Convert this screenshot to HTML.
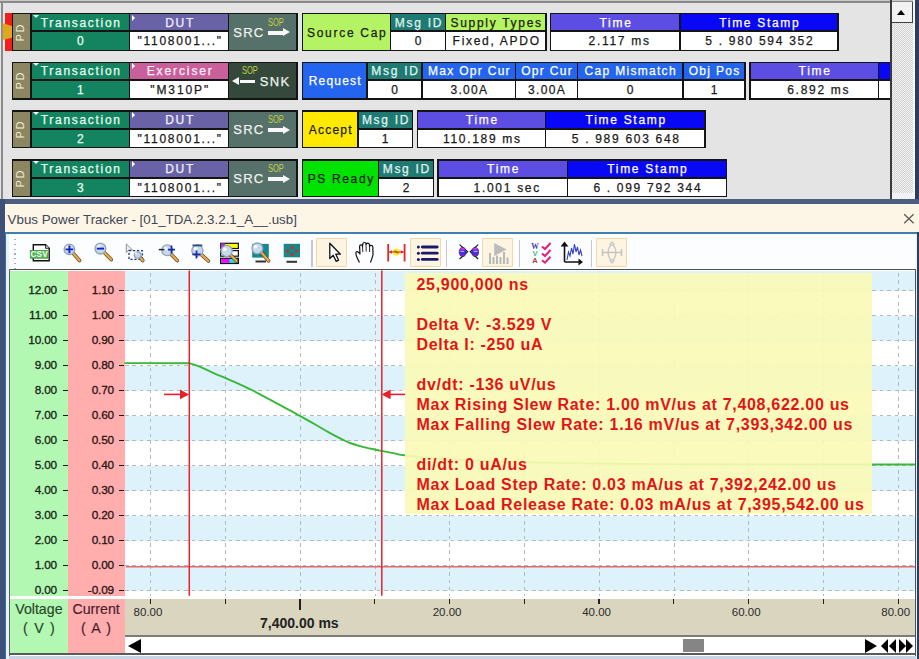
<!DOCTYPE html>
<html><head><meta charset="utf-8"><style>
html,body{margin:0;padding:0;width:919px;height:659px;overflow:hidden;background:#fff;font-family:'Liberation Sans', sans-serif}
</style></head><body>
<div style="position:absolute;left:0;top:0;width:919px;height:199px;background:#e4e4e4;overflow:hidden">
<div style="position:absolute;left:0px;top:0px;width:919px;height:1px;background:#c8c8c8"></div>
<div style="position:absolute;left:0px;top:1px;width:919px;height:1.5px;background:#8a8a8a"></div>
<div style="position:absolute;left:1px;top:1px;width:1.5px;height:198px;background:#8a8a8a"></div>
<div style="position:absolute;left:2.7px;top:12.8px;width:2.4px;height:38.2px;background:#f6e4e4"></div>
<div style="position:absolute;left:5px;top:12.8px;width:7.6px;height:38.2px;background:#f21d1d"></div>
<svg style="position:absolute;left:0;top:0" width="20" height="60"><polygon points="2.7,23.0 13.2,26.5 13.2,37.5 2.7,40.0" fill="#e0a622"/></svg>
<div style="position:absolute;left:11.8px;top:12.8px;width:19.8px;height:38.2px;background:#141414"></div>
<div style="position:absolute;left:13px;top:14.0px;width:17.4px;height:35.800000000000004px;background:#8c8762"></div>
<div style="position:absolute;left:0.3999999999999986px;top:25.5px;width:40px;height:14px;line-height:14px;text-align:center;transform:rotate(-90deg);font-family:'Liberation Sans', sans-serif;font-size:11px;letter-spacing:1.5px;text-indent:1.5px;color:#f2eed4">PD</div>
<div style="position:absolute;left:30.4px;top:12.8px;width:100.0px;height:38.2px;background:#141414"></div>
<div style="position:absolute;left:31.599999999999998px;top:14.0px;width:97.6px;height:16.200000000000003px;background:#148360"></div>
<div style="position:absolute;left:31.599999999999998px;top:32.0px;width:97.6px;height:17.800000000000004px;background:#148360"></div>
<div style="position:absolute;left:30.4px;top:14.5px;width:100.0px;height:17.3px;line-height:17.3px;text-align:center;white-space:nowrap;font-family:'Liberation Sans', sans-serif;font-size:12px;letter-spacing:1.7px;text-indent:1.7px;-webkit-text-stroke:0.25px currentColor;color:#e6fff0">Transaction</div>
<div style="position:absolute;left:30.4px;top:32.400000000000006px;width:100.0px;height:18.700000000000003px;line-height:18.700000000000003px;text-align:center;white-space:nowrap;font-family:'Liberation Sans', sans-serif;font-size:12px;letter-spacing:1.7px;text-indent:1.7px;-webkit-text-stroke:0.25px currentColor;color:#e6fff0">0</div>
<div style="position:absolute;left:32.8px;top:14.700000000000001px;width:0;height:0;border-left:3.2px solid transparent;border-right:3.2px solid transparent;border-top:3.6px solid #f0fff8"></div>
<div style="position:absolute;left:129.2px;top:12.8px;width:100.20000000000002px;height:38.2px;background:#141414"></div>
<div style="position:absolute;left:130.39999999999998px;top:14.0px;width:97.80000000000001px;height:16.200000000000003px;background:#6a62a6"></div>
<div style="position:absolute;left:130.39999999999998px;top:32.0px;width:97.80000000000001px;height:17.800000000000004px;background:#fff"></div>
<div style="position:absolute;left:129.2px;top:14.5px;width:100.20000000000002px;height:17.3px;line-height:17.3px;text-align:center;white-space:nowrap;font-family:'Liberation Sans', sans-serif;font-size:12px;letter-spacing:1.75px;text-indent:1.75px;-webkit-text-stroke:0.25px currentColor;color:#f0f0ff">DUT</div>
<div style="position:absolute;left:129.2px;top:32.400000000000006px;width:100.20000000000002px;height:18.700000000000003px;line-height:18.700000000000003px;text-align:center;white-space:nowrap;font-family:'Liberation Sans', sans-serif;font-size:12px;letter-spacing:1.75px;text-indent:1.75px;-webkit-text-stroke:0.25px currentColor;color:#1a1a1a">"1108001..."</div>
<div style="position:absolute;left:131.6px;top:14.700000000000001px;width:0;height:0;border-top:3.2px solid transparent;border-bottom:3.2px solid transparent;border-left:3.6px solid #ffffff"></div>
<div style="position:absolute;left:228.2px;top:12.8px;width:69.40000000000003px;height:38.2px;background:#141414"></div>
<div style="position:absolute;left:229.39999999999998px;top:14.0px;width:67.00000000000003px;height:35.800000000000004px;background:#56716a"></div>
<div style="position:absolute;left:233.2px;top:24.900000000000002px;width:40px;height:15px;line-height:15px;text-align:left;white-space:nowrap;font-family:'Liberation Sans', sans-serif;font-size:13px;letter-spacing:1.3px;color:#eef2ee;-webkit-text-stroke:0.25px currentColor;">SRC</div>
<div style="position:absolute;left:268.0px;top:16.7px;width:30px;height:10px;line-height:10px;text-align:left;white-space:nowrap;font-family:'Liberation Sans', sans-serif;font-size:11px;color:#c4d040;transform:scaleX(0.68);transform-origin:left center;">SOP</div>
<div style="position:absolute;left:267.8px;top:30.900000000000006px;width:16px;height:3.8px;background:#f8f8f8"></div>
<div style="position:absolute;left:283.2px;top:28.300000000000004px;width:0;height:0;border-top:4.5px solid transparent;border-bottom:4.5px solid transparent;border-left:7.6px solid #f8f8f8"></div>
<div style="position:absolute;left:301.6px;top:12.8px;width:89.59999999999997px;height:38.2px;background:#141414"></div>
<div style="position:absolute;left:302.90000000000003px;top:14.0px;width:86.99999999999997px;height:35.800000000000004px;background:#b4f464"></div>
<div style="position:absolute;left:301.6px;top:13.5px;width:89.59999999999997px;height:38.2px;line-height:38.2px;text-align:center;white-space:nowrap;font-family:'Liberation Sans', sans-serif;font-size:12px;letter-spacing:1.7px;text-indent:1.7px;-webkit-text-stroke:0.25px currentColor;color:#1c2010">Source Cap</div>
<div style="position:absolute;left:390px;top:12.8px;width:56.19999999999999px;height:38.2px;background:#141414"></div>
<div style="position:absolute;left:391.2px;top:14.0px;width:53.79999999999999px;height:16.200000000000003px;background:#1e7a72"></div>
<div style="position:absolute;left:391.2px;top:32.0px;width:53.79999999999999px;height:17.800000000000004px;background:#fff"></div>
<div style="position:absolute;left:390px;top:14.5px;width:56.19999999999999px;height:17.3px;line-height:17.3px;text-align:center;white-space:nowrap;font-family:'Liberation Sans', sans-serif;font-size:12px;letter-spacing:1.7px;text-indent:1.7px;-webkit-text-stroke:0.25px currentColor;color:#e0f4f0">Msg ID</div>
<div style="position:absolute;left:390px;top:32.400000000000006px;width:56.19999999999999px;height:18.700000000000003px;line-height:18.700000000000003px;text-align:center;white-space:nowrap;font-family:'Liberation Sans', sans-serif;font-size:12px;letter-spacing:1.7px;text-indent:1.7px;-webkit-text-stroke:0.25px currentColor;color:#1a1a1a">0</div>
<div style="position:absolute;left:445px;top:12.8px;width:101.60000000000002px;height:38.2px;background:#141414"></div>
<div style="position:absolute;left:446.2px;top:14.0px;width:99.20000000000002px;height:16.200000000000003px;background:#b4f464"></div>
<div style="position:absolute;left:446.2px;top:32.0px;width:99.20000000000002px;height:17.800000000000004px;background:#fff"></div>
<div style="position:absolute;left:445px;top:14.5px;width:101.60000000000002px;height:17.3px;line-height:17.3px;text-align:center;white-space:nowrap;font-family:'Liberation Sans', sans-serif;font-size:12px;letter-spacing:1.7px;text-indent:1.7px;-webkit-text-stroke:0.25px currentColor;color:#1c2010">Supply Types</div>
<div style="position:absolute;left:445px;top:32.400000000000006px;width:101.60000000000002px;height:18.700000000000003px;line-height:18.700000000000003px;text-align:center;white-space:nowrap;font-family:'Liberation Sans', sans-serif;font-size:12px;letter-spacing:1.7px;text-indent:1.7px;-webkit-text-stroke:0.25px currentColor;color:#1a1a1a">Fixed, APDO</div>
<div style="position:absolute;left:549.8px;top:12.8px;width:130.80000000000007px;height:38.2px;background:#141414"></div>
<div style="position:absolute;left:551.0px;top:14.0px;width:128.40000000000006px;height:16.200000000000003px;background:#5c4ee2"></div>
<div style="position:absolute;left:551.0px;top:32.0px;width:128.40000000000006px;height:17.800000000000004px;background:#fff"></div>
<div style="position:absolute;left:549.8px;top:14.5px;width:130.80000000000007px;height:17.3px;line-height:17.3px;text-align:center;white-space:nowrap;font-family:'Liberation Sans', sans-serif;font-size:12px;letter-spacing:1.7px;text-indent:1.7px;-webkit-text-stroke:0.25px currentColor;color:#ffffff">Time</div>
<div style="position:absolute;left:553.4px;top:32.400000000000006px;width:130.80000000000007px;height:18.700000000000003px;line-height:18.700000000000003px;text-align:center;white-space:nowrap;font-family:'Liberation Sans', sans-serif;font-size:12px;letter-spacing:1.7px;text-indent:1.7px;-webkit-text-stroke:0.25px currentColor;color:#1a1a1a">2.117 ms</div>
<div style="position:absolute;left:679.4px;top:12.8px;width:159.20000000000005px;height:38.2px;background:#141414"></div>
<div style="position:absolute;left:680.6px;top:14.0px;width:156.80000000000004px;height:16.200000000000003px;background:#0808f6"></div>
<div style="position:absolute;left:680.6px;top:32.0px;width:156.80000000000004px;height:17.800000000000004px;background:#fff"></div>
<div style="position:absolute;left:679.4px;top:14.5px;width:159.20000000000005px;height:17.3px;line-height:17.3px;text-align:center;white-space:nowrap;font-family:'Liberation Sans', sans-serif;font-size:12px;letter-spacing:1.7px;text-indent:1.7px;-webkit-text-stroke:0.25px currentColor;color:#ffffff">Time Stamp</div>
<div style="position:absolute;left:679.4px;top:32.400000000000006px;width:159.20000000000005px;height:18.700000000000003px;line-height:18.700000000000003px;text-align:center;white-space:nowrap;font-family:'Liberation Sans', sans-serif;font-size:12px;letter-spacing:1.7px;text-indent:1.7px;-webkit-text-stroke:0.25px currentColor;color:#1a1a1a">5 . 980 594 352</div>
<div style="position:absolute;left:11.8px;top:61.5px;width:19.8px;height:38.2px;background:#141414"></div>
<div style="position:absolute;left:13px;top:62.7px;width:17.4px;height:35.800000000000004px;background:#8c8762"></div>
<div style="position:absolute;left:0.3999999999999986px;top:74.19999999999999px;width:40px;height:14px;line-height:14px;text-align:center;transform:rotate(-90deg);font-family:'Liberation Sans', sans-serif;font-size:11px;letter-spacing:1.5px;text-indent:1.5px;color:#f2eed4">PD</div>
<div style="position:absolute;left:30.4px;top:61.5px;width:100.0px;height:38.2px;background:#141414"></div>
<div style="position:absolute;left:31.599999999999998px;top:62.7px;width:97.6px;height:16.200000000000003px;background:#148360"></div>
<div style="position:absolute;left:31.599999999999998px;top:80.7px;width:97.6px;height:17.800000000000004px;background:#148360"></div>
<div style="position:absolute;left:30.4px;top:63.2px;width:100.0px;height:17.3px;line-height:17.3px;text-align:center;white-space:nowrap;font-family:'Liberation Sans', sans-serif;font-size:12px;letter-spacing:1.7px;text-indent:1.7px;-webkit-text-stroke:0.25px currentColor;color:#e6fff0">Transaction</div>
<div style="position:absolute;left:30.4px;top:81.1px;width:100.0px;height:18.700000000000003px;line-height:18.700000000000003px;text-align:center;white-space:nowrap;font-family:'Liberation Sans', sans-serif;font-size:12px;letter-spacing:1.7px;text-indent:1.7px;-webkit-text-stroke:0.25px currentColor;color:#e6fff0">1</div>
<div style="position:absolute;left:32.8px;top:63.4px;width:0;height:0;border-left:3.2px solid transparent;border-right:3.2px solid transparent;border-top:3.6px solid #f0fff8"></div>
<div style="position:absolute;left:129.2px;top:61.5px;width:100.20000000000002px;height:38.2px;background:#141414"></div>
<div style="position:absolute;left:130.39999999999998px;top:62.7px;width:97.80000000000001px;height:16.200000000000003px;background:#c9609c"></div>
<div style="position:absolute;left:130.39999999999998px;top:80.7px;width:97.80000000000001px;height:17.800000000000004px;background:#fff"></div>
<div style="position:absolute;left:129.2px;top:63.2px;width:100.20000000000002px;height:17.3px;line-height:17.3px;text-align:center;white-space:nowrap;font-family:'Liberation Sans', sans-serif;font-size:12px;letter-spacing:1.9px;text-indent:1.9px;-webkit-text-stroke:0.25px currentColor;color:#fff0f8">Exerciser</div>
<div style="position:absolute;left:129.2px;top:81.1px;width:100.20000000000002px;height:18.700000000000003px;line-height:18.700000000000003px;text-align:center;white-space:nowrap;font-family:'Liberation Sans', sans-serif;font-size:12px;letter-spacing:1.9px;text-indent:1.9px;-webkit-text-stroke:0.25px currentColor;color:#1a1a1a">"M310P"</div>
<div style="position:absolute;left:131.6px;top:63.4px;width:0;height:0;border-top:3.2px solid transparent;border-bottom:3.2px solid transparent;border-left:3.6px solid #ffffff"></div>
<div style="position:absolute;left:228.2px;top:61.5px;width:69.40000000000003px;height:38.2px;background:#141414"></div>
<div style="position:absolute;left:229.39999999999998px;top:62.7px;width:67.00000000000003px;height:35.800000000000004px;background:#34493c"></div>
<div style="position:absolute;left:259.8px;top:73.6px;width:40px;height:15px;line-height:15px;text-align:left;white-space:nowrap;font-family:'Liberation Sans', sans-serif;font-size:13px;letter-spacing:1.3px;color:#eef2ee;-webkit-text-stroke:0.25px currentColor;">SNK</div>
<div style="position:absolute;left:241.5px;top:65.4px;width:30px;height:10px;line-height:10px;text-align:left;white-space:nowrap;font-family:'Liberation Sans', sans-serif;font-size:11px;color:#c4d040;transform:scaleX(0.68);transform-origin:left center;">SOP</div>
<div style="position:absolute;left:240px;top:79.6px;width:15px;height:3.8px;background:#f8f8f8"></div>
<div style="position:absolute;left:232.2px;top:77.1px;width:0;height:0;border-top:4.4px solid transparent;border-bottom:4.4px solid transparent;border-right:7.8px solid #f8f8f8"></div>
<div style="position:absolute;left:301.6px;top:61.5px;width:66.19999999999999px;height:38.2px;background:#141414"></div>
<div style="position:absolute;left:302.90000000000003px;top:62.7px;width:63.59999999999999px;height:35.800000000000004px;background:#2365ee"></div>
<div style="position:absolute;left:301.6px;top:62.2px;width:66.19999999999999px;height:38.2px;line-height:38.2px;text-align:center;white-space:nowrap;font-family:'Liberation Sans', sans-serif;font-size:12px;letter-spacing:1.2px;text-indent:1.2px;-webkit-text-stroke:0.25px currentColor;color:#ffffff">Request</div>
<div style="position:absolute;left:366.6px;top:61.5px;width:56.0px;height:38.2px;background:#141414"></div>
<div style="position:absolute;left:367.8px;top:62.7px;width:53.6px;height:16.200000000000003px;background:#1e7a72"></div>
<div style="position:absolute;left:367.8px;top:80.7px;width:53.6px;height:17.800000000000004px;background:#fff"></div>
<div style="position:absolute;left:366.6px;top:63.2px;width:56.0px;height:17.3px;line-height:17.3px;text-align:center;white-space:nowrap;font-family:'Liberation Sans', sans-serif;font-size:12px;letter-spacing:1.7px;text-indent:1.7px;-webkit-text-stroke:0.25px currentColor;color:#e0f4f0">Msg ID</div>
<div style="position:absolute;left:366.6px;top:81.1px;width:56.0px;height:18.700000000000003px;line-height:18.700000000000003px;text-align:center;white-space:nowrap;font-family:'Liberation Sans', sans-serif;font-size:12px;letter-spacing:1.7px;text-indent:1.7px;-webkit-text-stroke:0.25px currentColor;color:#1a1a1a">0</div>
<div style="position:absolute;left:421.4px;top:61.5px;width:94.80000000000007px;height:38.2px;background:#141414"></div>
<div style="position:absolute;left:422.59999999999997px;top:62.7px;width:92.40000000000006px;height:16.200000000000003px;background:#2365ee"></div>
<div style="position:absolute;left:422.59999999999997px;top:80.7px;width:92.40000000000006px;height:17.800000000000004px;background:#fff"></div>
<div style="position:absolute;left:421.4px;top:63.2px;width:94.80000000000007px;height:17.3px;line-height:17.3px;text-align:center;white-space:nowrap;font-family:'Liberation Sans', sans-serif;font-size:12px;letter-spacing:1.3px;text-indent:1.3px;-webkit-text-stroke:0.25px currentColor;color:#ffffff">Max Opr Cur</div>
<div style="position:absolute;left:421.4px;top:81.1px;width:94.80000000000007px;height:18.700000000000003px;line-height:18.700000000000003px;text-align:center;white-space:nowrap;font-family:'Liberation Sans', sans-serif;font-size:12px;letter-spacing:1.3px;text-indent:1.3px;-webkit-text-stroke:0.25px currentColor;color:#1a1a1a">3.00A</div>
<div style="position:absolute;left:515px;top:61.5px;width:62.799999999999955px;height:38.2px;background:#141414"></div>
<div style="position:absolute;left:516.2px;top:62.7px;width:60.399999999999956px;height:16.200000000000003px;background:#2365ee"></div>
<div style="position:absolute;left:516.2px;top:80.7px;width:60.399999999999956px;height:17.800000000000004px;background:#fff"></div>
<div style="position:absolute;left:515px;top:63.2px;width:62.799999999999955px;height:17.3px;line-height:17.3px;text-align:center;white-space:nowrap;font-family:'Liberation Sans', sans-serif;font-size:12px;letter-spacing:1.3px;text-indent:1.3px;-webkit-text-stroke:0.25px currentColor;color:#ffffff">Opr Cur</div>
<div style="position:absolute;left:515px;top:81.1px;width:62.799999999999955px;height:18.700000000000003px;line-height:18.700000000000003px;text-align:center;white-space:nowrap;font-family:'Liberation Sans', sans-serif;font-size:12px;letter-spacing:1.3px;text-indent:1.3px;-webkit-text-stroke:0.25px currentColor;color:#1a1a1a">3.00A</div>
<div style="position:absolute;left:576.6px;top:61.5px;width:107.0px;height:38.2px;background:#141414"></div>
<div style="position:absolute;left:577.8000000000001px;top:62.7px;width:104.6px;height:16.200000000000003px;background:#2365ee"></div>
<div style="position:absolute;left:577.8000000000001px;top:80.7px;width:104.6px;height:17.800000000000004px;background:#fff"></div>
<div style="position:absolute;left:576.6px;top:63.2px;width:107.0px;height:17.3px;line-height:17.3px;text-align:center;white-space:nowrap;font-family:'Liberation Sans', sans-serif;font-size:12px;letter-spacing:1.3px;text-indent:1.3px;-webkit-text-stroke:0.25px currentColor;color:#ffffff">Cap Mismatch</div>
<div style="position:absolute;left:576.6px;top:81.1px;width:107.0px;height:18.700000000000003px;line-height:18.700000000000003px;text-align:center;white-space:nowrap;font-family:'Liberation Sans', sans-serif;font-size:12px;letter-spacing:1.3px;text-indent:1.3px;-webkit-text-stroke:0.25px currentColor;color:#1a1a1a">0</div>
<div style="position:absolute;left:682.4px;top:61.5px;width:63.200000000000045px;height:38.2px;background:#141414"></div>
<div style="position:absolute;left:683.6px;top:62.7px;width:60.80000000000005px;height:16.200000000000003px;background:#2365ee"></div>
<div style="position:absolute;left:683.6px;top:80.7px;width:60.80000000000005px;height:17.800000000000004px;background:#fff"></div>
<div style="position:absolute;left:682.4px;top:63.2px;width:63.200000000000045px;height:17.3px;line-height:17.3px;text-align:center;white-space:nowrap;font-family:'Liberation Sans', sans-serif;font-size:12px;letter-spacing:1.3px;text-indent:1.3px;-webkit-text-stroke:0.25px currentColor;color:#ffffff">Obj Pos</div>
<div style="position:absolute;left:682.4px;top:81.1px;width:63.200000000000045px;height:18.700000000000003px;line-height:18.700000000000003px;text-align:center;white-space:nowrap;font-family:'Liberation Sans', sans-serif;font-size:12px;letter-spacing:1.3px;text-indent:1.3px;-webkit-text-stroke:0.25px currentColor;color:#1a1a1a">1</div>
<div style="position:absolute;left:749.4px;top:61.5px;width:129.80000000000007px;height:38.2px;background:#141414"></div>
<div style="position:absolute;left:750.6px;top:62.7px;width:127.40000000000006px;height:16.200000000000003px;background:#5c4ee2"></div>
<div style="position:absolute;left:750.6px;top:80.7px;width:127.40000000000006px;height:17.800000000000004px;background:#fff"></div>
<div style="position:absolute;left:749.4px;top:63.2px;width:129.80000000000007px;height:17.3px;line-height:17.3px;text-align:center;white-space:nowrap;font-family:'Liberation Sans', sans-serif;font-size:12px;letter-spacing:1.7px;text-indent:1.7px;-webkit-text-stroke:0.25px currentColor;color:#ffffff">Time</div>
<div style="position:absolute;left:753.0px;top:81.1px;width:129.80000000000007px;height:18.700000000000003px;line-height:18.700000000000003px;text-align:center;white-space:nowrap;font-family:'Liberation Sans', sans-serif;font-size:12px;letter-spacing:1.7px;text-indent:1.7px;-webkit-text-stroke:0.25px currentColor;color:#1a1a1a">6.892 ms</div>
<div style="position:absolute;left:878px;top:61.5px;width:82px;height:38.2px;background:#141414"></div>
<div style="position:absolute;left:879.2px;top:62.7px;width:79.6px;height:16.200000000000003px;background:#0808f6"></div>
<div style="position:absolute;left:879.2px;top:80.7px;width:79.6px;height:17.800000000000004px;background:#fff"></div>
<div style="position:absolute;left:878px;top:63.2px;width:82px;height:17.3px;line-height:17.3px;text-align:center;white-space:nowrap;font-family:'Liberation Sans', sans-serif;font-size:12px;letter-spacing:1.7px;text-indent:1.7px;-webkit-text-stroke:0.25px currentColor;color:#ffffff"></div>
<div style="position:absolute;left:878px;top:81.1px;width:82px;height:18.700000000000003px;line-height:18.700000000000003px;text-align:center;white-space:nowrap;font-family:'Liberation Sans', sans-serif;font-size:12px;letter-spacing:1.7px;text-indent:1.7px;-webkit-text-stroke:0.25px currentColor;color:#1a1a1a"></div>
<div style="position:absolute;left:11.8px;top:110.3px;width:19.8px;height:38.2px;background:#141414"></div>
<div style="position:absolute;left:13px;top:111.5px;width:17.4px;height:35.800000000000004px;background:#8c8762"></div>
<div style="position:absolute;left:0.3999999999999986px;top:123.0px;width:40px;height:14px;line-height:14px;text-align:center;transform:rotate(-90deg);font-family:'Liberation Sans', sans-serif;font-size:11px;letter-spacing:1.5px;text-indent:1.5px;color:#f2eed4">PD</div>
<div style="position:absolute;left:30.4px;top:110.3px;width:100.0px;height:38.2px;background:#141414"></div>
<div style="position:absolute;left:31.599999999999998px;top:111.5px;width:97.6px;height:16.200000000000003px;background:#148360"></div>
<div style="position:absolute;left:31.599999999999998px;top:129.5px;width:97.6px;height:17.800000000000004px;background:#148360"></div>
<div style="position:absolute;left:30.4px;top:112.0px;width:100.0px;height:17.3px;line-height:17.3px;text-align:center;white-space:nowrap;font-family:'Liberation Sans', sans-serif;font-size:12px;letter-spacing:1.7px;text-indent:1.7px;-webkit-text-stroke:0.25px currentColor;color:#e6fff0">Transaction</div>
<div style="position:absolute;left:30.4px;top:129.89999999999998px;width:100.0px;height:18.700000000000003px;line-height:18.700000000000003px;text-align:center;white-space:nowrap;font-family:'Liberation Sans', sans-serif;font-size:12px;letter-spacing:1.7px;text-indent:1.7px;-webkit-text-stroke:0.25px currentColor;color:#e6fff0">2</div>
<div style="position:absolute;left:32.8px;top:112.2px;width:0;height:0;border-left:3.2px solid transparent;border-right:3.2px solid transparent;border-top:3.6px solid #f0fff8"></div>
<div style="position:absolute;left:129.2px;top:110.3px;width:100.20000000000002px;height:38.2px;background:#141414"></div>
<div style="position:absolute;left:130.39999999999998px;top:111.5px;width:97.80000000000001px;height:16.200000000000003px;background:#6a62a6"></div>
<div style="position:absolute;left:130.39999999999998px;top:129.5px;width:97.80000000000001px;height:17.800000000000004px;background:#fff"></div>
<div style="position:absolute;left:129.2px;top:112.0px;width:100.20000000000002px;height:17.3px;line-height:17.3px;text-align:center;white-space:nowrap;font-family:'Liberation Sans', sans-serif;font-size:12px;letter-spacing:1.75px;text-indent:1.75px;-webkit-text-stroke:0.25px currentColor;color:#f0f0ff">DUT</div>
<div style="position:absolute;left:129.2px;top:129.89999999999998px;width:100.20000000000002px;height:18.700000000000003px;line-height:18.700000000000003px;text-align:center;white-space:nowrap;font-family:'Liberation Sans', sans-serif;font-size:12px;letter-spacing:1.75px;text-indent:1.75px;-webkit-text-stroke:0.25px currentColor;color:#1a1a1a">"1108001..."</div>
<div style="position:absolute;left:131.6px;top:112.2px;width:0;height:0;border-top:3.2px solid transparent;border-bottom:3.2px solid transparent;border-left:3.6px solid #ffffff"></div>
<div style="position:absolute;left:228.2px;top:110.3px;width:69.40000000000003px;height:38.2px;background:#141414"></div>
<div style="position:absolute;left:229.39999999999998px;top:111.5px;width:67.00000000000003px;height:35.800000000000004px;background:#56716a"></div>
<div style="position:absolute;left:233.2px;top:122.4px;width:40px;height:15px;line-height:15px;text-align:left;white-space:nowrap;font-family:'Liberation Sans', sans-serif;font-size:13px;letter-spacing:1.3px;color:#eef2ee;-webkit-text-stroke:0.25px currentColor;">SRC</div>
<div style="position:absolute;left:268.0px;top:114.2px;width:30px;height:10px;line-height:10px;text-align:left;white-space:nowrap;font-family:'Liberation Sans', sans-serif;font-size:11px;color:#c4d040;transform:scaleX(0.68);transform-origin:left center;">SOP</div>
<div style="position:absolute;left:267.8px;top:128.4px;width:16px;height:3.8px;background:#f8f8f8"></div>
<div style="position:absolute;left:283.2px;top:125.80000000000001px;width:0;height:0;border-top:4.5px solid transparent;border-bottom:4.5px solid transparent;border-left:7.6px solid #f8f8f8"></div>
<div style="position:absolute;left:301.6px;top:110.3px;width:57.0px;height:38.2px;background:#141414"></div>
<div style="position:absolute;left:302.90000000000003px;top:111.5px;width:54.4px;height:35.800000000000004px;background:#ffe900"></div>
<div style="position:absolute;left:301.6px;top:111.0px;width:57.0px;height:38.2px;line-height:38.2px;text-align:center;white-space:nowrap;font-family:'Liberation Sans', sans-serif;font-size:12px;letter-spacing:1.25px;text-indent:1.25px;-webkit-text-stroke:0.25px currentColor;color:#1c1c00">Accept</div>
<div style="position:absolute;left:357.4px;top:110.3px;width:55.60000000000002px;height:38.2px;background:#141414"></div>
<div style="position:absolute;left:358.59999999999997px;top:111.5px;width:53.200000000000024px;height:16.200000000000003px;background:#1e7a72"></div>
<div style="position:absolute;left:358.59999999999997px;top:129.5px;width:53.200000000000024px;height:17.800000000000004px;background:#fff"></div>
<div style="position:absolute;left:357.4px;top:112.0px;width:55.60000000000002px;height:17.3px;line-height:17.3px;text-align:center;white-space:nowrap;font-family:'Liberation Sans', sans-serif;font-size:12px;letter-spacing:1.7px;text-indent:1.7px;-webkit-text-stroke:0.25px currentColor;color:#e0f4f0">Msg ID</div>
<div style="position:absolute;left:357.4px;top:129.89999999999998px;width:55.60000000000002px;height:18.700000000000003px;line-height:18.700000000000003px;text-align:center;white-space:nowrap;font-family:'Liberation Sans', sans-serif;font-size:12px;letter-spacing:1.7px;text-indent:1.7px;-webkit-text-stroke:0.25px currentColor;color:#1a1a1a">1</div>
<div style="position:absolute;left:416.6px;top:110.3px;width:129.79999999999995px;height:38.2px;background:#141414"></div>
<div style="position:absolute;left:417.8px;top:111.5px;width:127.39999999999995px;height:16.200000000000003px;background:#5c4ee2"></div>
<div style="position:absolute;left:417.8px;top:129.5px;width:127.39999999999995px;height:17.800000000000004px;background:#fff"></div>
<div style="position:absolute;left:416.6px;top:112.0px;width:129.79999999999995px;height:17.3px;line-height:17.3px;text-align:center;white-space:nowrap;font-family:'Liberation Sans', sans-serif;font-size:12px;letter-spacing:1.7px;text-indent:1.7px;-webkit-text-stroke:0.25px currentColor;color:#ffffff">Time</div>
<div style="position:absolute;left:416.6px;top:129.89999999999998px;width:129.79999999999995px;height:18.700000000000003px;line-height:18.700000000000003px;text-align:center;white-space:nowrap;font-family:'Liberation Sans', sans-serif;font-size:12px;letter-spacing:1.7px;text-indent:1.7px;-webkit-text-stroke:0.25px currentColor;color:#1a1a1a">110.189 ms</div>
<div style="position:absolute;left:545.2px;top:110.3px;width:160.39999999999998px;height:38.2px;background:#141414"></div>
<div style="position:absolute;left:546.4000000000001px;top:111.5px;width:157.99999999999997px;height:16.200000000000003px;background:#0808f6"></div>
<div style="position:absolute;left:546.4000000000001px;top:129.5px;width:157.99999999999997px;height:17.800000000000004px;background:#fff"></div>
<div style="position:absolute;left:545.2px;top:112.0px;width:160.39999999999998px;height:17.3px;line-height:17.3px;text-align:center;white-space:nowrap;font-family:'Liberation Sans', sans-serif;font-size:12px;letter-spacing:1.7px;text-indent:1.7px;-webkit-text-stroke:0.25px currentColor;color:#ffffff">Time Stamp</div>
<div style="position:absolute;left:545.2px;top:129.89999999999998px;width:160.39999999999998px;height:18.700000000000003px;line-height:18.700000000000003px;text-align:center;white-space:nowrap;font-family:'Liberation Sans', sans-serif;font-size:12px;letter-spacing:1.7px;text-indent:1.7px;-webkit-text-stroke:0.25px currentColor;color:#1a1a1a">5 . 989 603 648</div>
<div style="position:absolute;left:11.8px;top:159.3px;width:19.8px;height:38.2px;background:#141414"></div>
<div style="position:absolute;left:13px;top:160.5px;width:17.4px;height:35.800000000000004px;background:#8c8762"></div>
<div style="position:absolute;left:0.3999999999999986px;top:172.0px;width:40px;height:14px;line-height:14px;text-align:center;transform:rotate(-90deg);font-family:'Liberation Sans', sans-serif;font-size:11px;letter-spacing:1.5px;text-indent:1.5px;color:#f2eed4">PD</div>
<div style="position:absolute;left:30.4px;top:159.3px;width:100.0px;height:38.2px;background:#141414"></div>
<div style="position:absolute;left:31.599999999999998px;top:160.5px;width:97.6px;height:16.200000000000003px;background:#148360"></div>
<div style="position:absolute;left:31.599999999999998px;top:178.50000000000003px;width:97.6px;height:17.800000000000004px;background:#148360"></div>
<div style="position:absolute;left:30.4px;top:161.0px;width:100.0px;height:17.3px;line-height:17.3px;text-align:center;white-space:nowrap;font-family:'Liberation Sans', sans-serif;font-size:12px;letter-spacing:1.7px;text-indent:1.7px;-webkit-text-stroke:0.25px currentColor;color:#e6fff0">Transaction</div>
<div style="position:absolute;left:30.4px;top:178.9px;width:100.0px;height:18.700000000000003px;line-height:18.700000000000003px;text-align:center;white-space:nowrap;font-family:'Liberation Sans', sans-serif;font-size:12px;letter-spacing:1.7px;text-indent:1.7px;-webkit-text-stroke:0.25px currentColor;color:#e6fff0">3</div>
<div style="position:absolute;left:32.8px;top:161.20000000000002px;width:0;height:0;border-left:3.2px solid transparent;border-right:3.2px solid transparent;border-top:3.6px solid #f0fff8"></div>
<div style="position:absolute;left:129.2px;top:159.3px;width:100.20000000000002px;height:38.2px;background:#141414"></div>
<div style="position:absolute;left:130.39999999999998px;top:160.5px;width:97.80000000000001px;height:16.200000000000003px;background:#6a62a6"></div>
<div style="position:absolute;left:130.39999999999998px;top:178.50000000000003px;width:97.80000000000001px;height:17.800000000000004px;background:#fff"></div>
<div style="position:absolute;left:129.2px;top:161.0px;width:100.20000000000002px;height:17.3px;line-height:17.3px;text-align:center;white-space:nowrap;font-family:'Liberation Sans', sans-serif;font-size:12px;letter-spacing:1.75px;text-indent:1.75px;-webkit-text-stroke:0.25px currentColor;color:#f0f0ff">DUT</div>
<div style="position:absolute;left:129.2px;top:178.9px;width:100.20000000000002px;height:18.700000000000003px;line-height:18.700000000000003px;text-align:center;white-space:nowrap;font-family:'Liberation Sans', sans-serif;font-size:12px;letter-spacing:1.75px;text-indent:1.75px;-webkit-text-stroke:0.25px currentColor;color:#1a1a1a">"1108001..."</div>
<div style="position:absolute;left:131.6px;top:161.20000000000002px;width:0;height:0;border-top:3.2px solid transparent;border-bottom:3.2px solid transparent;border-left:3.6px solid #ffffff"></div>
<div style="position:absolute;left:228.2px;top:159.3px;width:69.40000000000003px;height:38.2px;background:#141414"></div>
<div style="position:absolute;left:229.39999999999998px;top:160.5px;width:67.00000000000003px;height:35.800000000000004px;background:#56716a"></div>
<div style="position:absolute;left:233.2px;top:171.4px;width:40px;height:15px;line-height:15px;text-align:left;white-space:nowrap;font-family:'Liberation Sans', sans-serif;font-size:13px;letter-spacing:1.3px;color:#eef2ee;-webkit-text-stroke:0.25px currentColor;">SRC</div>
<div style="position:absolute;left:268.0px;top:163.20000000000002px;width:30px;height:10px;line-height:10px;text-align:left;white-space:nowrap;font-family:'Liberation Sans', sans-serif;font-size:11px;color:#c4d040;transform:scaleX(0.68);transform-origin:left center;">SOP</div>
<div style="position:absolute;left:267.8px;top:177.4px;width:16px;height:3.8px;background:#f8f8f8"></div>
<div style="position:absolute;left:283.2px;top:174.8px;width:0;height:0;border-top:4.5px solid transparent;border-bottom:4.5px solid transparent;border-left:7.6px solid #f8f8f8"></div>
<div style="position:absolute;left:301.6px;top:159.3px;width:77.79999999999995px;height:38.2px;background:#141414"></div>
<div style="position:absolute;left:302.90000000000003px;top:160.5px;width:75.19999999999996px;height:35.800000000000004px;background:#00e300"></div>
<div style="position:absolute;left:301.6px;top:160.0px;width:77.79999999999995px;height:38.2px;line-height:38.2px;text-align:center;white-space:nowrap;font-family:'Liberation Sans', sans-serif;font-size:12px;letter-spacing:1.65px;text-indent:1.65px;-webkit-text-stroke:0.25px currentColor;color:#102010">PS Ready</div>
<div style="position:absolute;left:378.2px;top:159.3px;width:55.60000000000002px;height:38.2px;background:#141414"></div>
<div style="position:absolute;left:379.4px;top:160.5px;width:53.200000000000024px;height:16.200000000000003px;background:#1e7a72"></div>
<div style="position:absolute;left:379.4px;top:178.50000000000003px;width:53.200000000000024px;height:17.800000000000004px;background:#fff"></div>
<div style="position:absolute;left:378.2px;top:161.0px;width:55.60000000000002px;height:17.3px;line-height:17.3px;text-align:center;white-space:nowrap;font-family:'Liberation Sans', sans-serif;font-size:12px;letter-spacing:1.7px;text-indent:1.7px;-webkit-text-stroke:0.25px currentColor;color:#e0f4f0">Msg ID</div>
<div style="position:absolute;left:378.2px;top:178.9px;width:55.60000000000002px;height:18.700000000000003px;line-height:18.700000000000003px;text-align:center;white-space:nowrap;font-family:'Liberation Sans', sans-serif;font-size:12px;letter-spacing:1.7px;text-indent:1.7px;-webkit-text-stroke:0.25px currentColor;color:#1a1a1a">2</div>
<div style="position:absolute;left:437.4px;top:159.3px;width:130.80000000000007px;height:38.2px;background:#141414"></div>
<div style="position:absolute;left:438.59999999999997px;top:160.5px;width:128.40000000000006px;height:16.200000000000003px;background:#5c4ee2"></div>
<div style="position:absolute;left:438.59999999999997px;top:178.50000000000003px;width:128.40000000000006px;height:17.800000000000004px;background:#fff"></div>
<div style="position:absolute;left:437.4px;top:161.0px;width:130.80000000000007px;height:17.3px;line-height:17.3px;text-align:center;white-space:nowrap;font-family:'Liberation Sans', sans-serif;font-size:12px;letter-spacing:1.7px;text-indent:1.7px;-webkit-text-stroke:0.25px currentColor;color:#ffffff">Time</div>
<div style="position:absolute;left:441.0px;top:178.9px;width:130.80000000000007px;height:18.700000000000003px;line-height:18.700000000000003px;text-align:center;white-space:nowrap;font-family:'Liberation Sans', sans-serif;font-size:12px;letter-spacing:1.7px;text-indent:1.7px;-webkit-text-stroke:0.25px currentColor;color:#1a1a1a">1.001 sec</div>
<div style="position:absolute;left:567.0px;top:159.3px;width:160.0px;height:38.2px;background:#141414"></div>
<div style="position:absolute;left:568.2px;top:160.5px;width:157.6px;height:16.200000000000003px;background:#0808f6"></div>
<div style="position:absolute;left:568.2px;top:178.50000000000003px;width:157.6px;height:17.800000000000004px;background:#fff"></div>
<div style="position:absolute;left:567.0px;top:161.0px;width:160.0px;height:17.3px;line-height:17.3px;text-align:center;white-space:nowrap;font-family:'Liberation Sans', sans-serif;font-size:12px;letter-spacing:1.7px;text-indent:1.7px;-webkit-text-stroke:0.25px currentColor;color:#ffffff">Time Stamp</div>
<div style="position:absolute;left:567.0px;top:178.9px;width:160.0px;height:18.700000000000003px;line-height:18.700000000000003px;text-align:center;white-space:nowrap;font-family:'Liberation Sans', sans-serif;font-size:12px;letter-spacing:1.7px;text-indent:1.7px;-webkit-text-stroke:0.25px currentColor;color:#1a1a1a">6 . 099 792 344</div>
<div style="position:absolute;left:890px;top:0px;width:1.6px;height:199px;background:#3a3a3a"></div>
<div style="position:absolute;left:891.6px;top:2px;width:21.4px;height:197px;background-color:#e8e8e8;background-image:repeating-conic-gradient(#d0d0d0 0 25%, #f4f4f4 0 50%);background-size:2px 2px"></div>
<div style="position:absolute;left:891.6px;top:2px;width:21px;height:21.4px;background:#f2f2f2;border-right:1.3px solid #404040;border-bottom:1.3px solid #404040;box-sizing:border-box"></div>
<div style="position:absolute;left:896.8px;top:10px;width:0;height:0;border-left:4.5px solid transparent;border-right:4.5px solid transparent;border-bottom:5px solid #000"></div>
<div style="position:absolute;left:892px;top:192.5px;width:21px;height:7px;background:#f2f2f2"></div>
<div style="position:absolute;left:912.5px;top:0px;width:2.5px;height:199px;background:#f6f6f6"></div>
<div style="position:absolute;left:915px;top:0px;width:4px;height:199px;background:#2b3c5c"></div>
</div>
<div style="position:absolute;left:0px;top:198.6px;width:919px;height:5.6px;background:#4c5d82"></div>
<div style="position:absolute;left:0px;top:198.6px;width:4.8px;height:461px;background:#3d5078"></div>
<div style="position:absolute;left:4.8px;top:204.2px;width:914.2px;height:28px;background:#fdf5e5"></div>
<div style="position:absolute;left:7.6px;top:205.6px;width:400px;height:28px;line-height:28px;text-align:left;white-space:nowrap;font-family:'Liberation Sans', sans-serif;font-size:13.35px;color:#3c4658">Vbus Power Tracker - [01_TDA.2.3.2.1_A__.usb]</div>
<svg style="position:absolute;left:0;top:0" width="919" height="240"><path d="M904.2,214.2 L913.6,223.2 M913.6,214.2 L904.2,223.2" stroke="#5c5c5c" stroke-width="1.35"/></svg>
<div style="position:absolute;left:4.8px;top:232.2px;width:914.2px;height:2.2px;background:#3f7fb0"></div>
<div style="position:absolute;left:4.8px;top:234.4px;width:914.2px;height:34.4px;background:#fcfdfe"></div>
<div style="position:absolute;left:14.4px;top:238.8px;width:1.3px;height:1.3px;background:#a4aebc"></div>
<div style="position:absolute;left:14.4px;top:243.65px;width:1.3px;height:1.3px;background:#a4aebc"></div>
<div style="position:absolute;left:14.4px;top:248.5px;width:1.3px;height:1.3px;background:#a4aebc"></div>
<div style="position:absolute;left:14.4px;top:253.35000000000002px;width:1.3px;height:1.3px;background:#a4aebc"></div>
<div style="position:absolute;left:14.4px;top:258.2px;width:1.3px;height:1.3px;background:#a4aebc"></div>
<div style="position:absolute;left:14.4px;top:263.05px;width:1.3px;height:1.3px;background:#a4aebc"></div>
<div style="position:absolute;left:14.4px;top:267.90000000000003px;width:1.3px;height:1.3px;background:#a4aebc"></div>
<div style="position:absolute;left:316.4px;top:238.2px;width:30.5px;height:29.3px;background:#fef4e2;border:1.2px solid #eed9a8;box-sizing:border-box;border-radius:1px"></div>
<div style="position:absolute;left:410.2px;top:238.2px;width:30.900000000000034px;height:29.3px;background:#fef4e2;border:1.2px solid #eed9a8;box-sizing:border-box;border-radius:1px"></div>
<div style="position:absolute;left:482.4px;top:238.2px;width:31.0px;height:29.3px;background:#fef4e2;border:1.2px solid #eed9a8;box-sizing:border-box;border-radius:1px"></div>
<div style="position:absolute;left:596.4px;top:238.2px;width:31.0px;height:29.3px;background:#fef4e2;border:1.2px solid #eed9a8;box-sizing:border-box;border-radius:1px"></div>
<div style="position:absolute;left:311.4px;top:239.5px;width:1.3px;height:27px;background:#c4c8d2"></div>
<div style="position:absolute;left:446.0px;top:239.5px;width:1.3px;height:27px;background:#c4c8d2"></div>
<div style="position:absolute;left:518.9px;top:239.5px;width:1.3px;height:27px;background:#c4c8d2"></div>
<div style="position:absolute;left:591.0px;top:239.5px;width:1.3px;height:27px;background:#c4c8d2"></div>
<svg style="position:absolute;left:0;top:0" width="919" height="659" viewBox="0 0 919 659"><path d="M33.3,244.7 L45.6,244.7 L49.2,248.3 L49.2,260.7 L33.3,260.7 Z" fill="#fff" stroke="#111" stroke-width="1.4"/><path d="M45.6,244.7 L45.6,248.3 L49.2,248.3" fill="#ddd" stroke="#111" stroke-width="0.9"/><rect x="30.3" y="250.4" width="17.6" height="7.8" fill="#58b858" stroke="#3c963c" stroke-width="0.8"/><text x="39.1" y="257.4" text-anchor="middle" font-family="Liberation Sans" font-weight="bold" font-size="8.2" fill="#f4fff4" letter-spacing="0.2">CSV</text><line x1="73.21600000000001" y1="253.216" x2="79.5" y2="260.5" stroke="#5a4a30" stroke-width="3.6" stroke-linecap="round"/><line x1="73.21600000000001" y1="253.216" x2="79.5" y2="260.5" stroke="#f0a848" stroke-width="2.2" stroke-linecap="round"/><circle cx="69.4" cy="249.4" r="5.3" fill="#c6d8ec" stroke="#90a4b8" stroke-width="1.3"/><circle cx="67.60000000000001" cy="247.6" r="1.8549999999999998" fill="#ffffff" opacity="0.8"/><path d="M65.6,249.4 H73.2 M69.4,245.6 V253.2" stroke="#1420c8" stroke-width="1.9"/><line x1="104.28800000000001" y1="252.488" x2="111.2" y2="259.6" stroke="#5a4a30" stroke-width="3.6" stroke-linecap="round"/><line x1="104.28800000000001" y1="252.488" x2="111.2" y2="259.6" stroke="#f0a848" stroke-width="2.2" stroke-linecap="round"/><circle cx="100.4" cy="248.6" r="5.4" fill="#c6d8ec" stroke="#90a4b8" stroke-width="1.3"/><circle cx="98.60000000000001" cy="246.79999999999998" r="1.89" fill="#ffffff" opacity="0.8"/><path d="M96.8,248.6 H104" stroke="#1420c8" stroke-width="1.9"/><path d="M126.3,244 L126.3,252.5 L128.6,250.2 L132.5,250 Z" fill="#f0f0f0" stroke="#888" stroke-width="0.9"/><rect x="129" y="250.6" width="13.4" height="8.8" fill="none" stroke="#1a3a80" stroke-width="1.3" stroke-dasharray="2.2 1.8"/><line x1="139.904" y1="257.304" x2="142.8" y2="260.5" stroke="#5a4a30" stroke-width="3.6" stroke-linecap="round"/><line x1="139.904" y1="257.304" x2="142.8" y2="260.5" stroke="#f0a848" stroke-width="2.2" stroke-linecap="round"/><circle cx="137.6" cy="255" r="3.2" fill="#c6d8ec" stroke="#90a4b8" stroke-width="1.3"/><circle cx="135.79999999999998" cy="253.2" r="1.1199999999999999" fill="#ffffff" opacity="0.8"/><line x1="171.088" y1="254.18800000000002" x2="177.2" y2="260.6" stroke="#5a4a30" stroke-width="3.6" stroke-linecap="round"/><line x1="171.088" y1="254.18800000000002" x2="177.2" y2="260.6" stroke="#f0a848" stroke-width="2.2" stroke-linecap="round"/><circle cx="167.2" cy="250.3" r="5.4" fill="#c6d8ec" stroke="#90a4b8" stroke-width="1.3"/><circle cx="165.39999999999998" cy="248.5" r="1.89" fill="#ffffff" opacity="0.8"/><path d="M158.8,249.6 H164.5" stroke="#202830" stroke-width="1.5"/><path d="M168,249.6 H175 M171.5,245.4 V253.6" stroke="#1a2aa8" stroke-width="1.7"/><line x1="201.43200000000002" y1="254.632" x2="208.4" y2="261" stroke="#5a4a30" stroke-width="3.6" stroke-linecap="round"/><line x1="201.43200000000002" y1="254.632" x2="208.4" y2="261" stroke="#f0a848" stroke-width="2.2" stroke-linecap="round"/><circle cx="197.4" cy="250.6" r="5.6" fill="#c6d8ec" stroke="#90a4b8" stroke-width="1.3"/><circle cx="195.6" cy="248.79999999999998" r="1.9599999999999997" fill="#ffffff" opacity="0.8"/><path d="M192.5,245.4 H202.3" stroke="#2a4a88" stroke-width="1.8"/><path d="M192.4,254.4 H200.6 M196.5,250.4 V258.4" stroke="#1a2aa8" stroke-width="1.7"/><rect x="220.6" y="243.3" width="17.8" height="5.2" fill="#ffff00" stroke="#111" stroke-width="1.2"/><rect x="220.6" y="243.3" width="4.5" height="5.2" fill="#b030c0"/><rect x="220.6" y="250.6" width="17.8" height="5.6" fill="#fff" stroke="#111" stroke-width="1.2"/><rect x="220.6" y="258.3" width="17.8" height="5.2" fill="#18e8e8" stroke="#111" stroke-width="1.2"/><rect x="221.4" y="259" width="8" height="3.8" fill="#ff00ff"/><line x1="230.632" y1="255.032" x2="236.5" y2="261" stroke="#5a4a30" stroke-width="3.6" stroke-linecap="round"/><line x1="230.632" y1="255.032" x2="236.5" y2="261" stroke="#f0a848" stroke-width="2.2" stroke-linecap="round"/><circle cx="226.6" cy="251" r="5.6" fill="#c6d8ec" stroke="#90a4b8" stroke-width="1.3"/><circle cx="224.79999999999998" cy="249.2" r="1.9599999999999997" fill="#ffffff" opacity="0.8"/><rect x="252.2" y="243.9" width="16.6" height="13.7" fill="#16888a"/><path d="M255.5,261.5 H266" stroke="#333" stroke-width="2"/><line x1="261.28799999999995" y1="252.288" x2="268.5" y2="260.8" stroke="#5a4a30" stroke-width="3.6" stroke-linecap="round"/><line x1="261.28799999999995" y1="252.288" x2="268.5" y2="260.8" stroke="#f0a848" stroke-width="2.2" stroke-linecap="round"/><circle cx="257.4" cy="248.4" r="5.4" fill="#c6d8ec" stroke="#90a4b8" stroke-width="1.3"/><circle cx="255.59999999999997" cy="246.6" r="1.89" fill="#ffffff" opacity="0.8"/><rect x="283.7" y="243.8" width="16.3" height="13.5" fill="#16888a"/><path d="M286.5,261.8 H297" stroke="#333" stroke-width="2"/><circle cx="292" cy="247.2" r="1.5" fill="#d82828"/><circle cx="287.2" cy="251" r="1.5" fill="#d82828"/><circle cx="296.8" cy="251" r="1.5" fill="#d82828"/><circle cx="292" cy="254.6" r="1.5" fill="#d82828"/><path d="M292,247.2 L287.2,251 L292,254.6 L296.8,251 Z" fill="none" stroke="#a04040" stroke-width="0.5"/><path d="M329.8,243.2 L329.8,258.6 L333.2,255.2 L336.2,261.4 L338.6,260.2 L335.8,254.2 L340.4,254.2 Z" fill="#fff" stroke="#111" stroke-width="1.3" stroke-linejoin="round"/><path d="M359.5,262.5 C357,258 355,254 356.2,252 C357.4,250.6 359,252.5 360,254 L359.6,246.5 C359.6,244.4 362.4,244.4 362.5,246.5 L362.8,244 C363,242 366,242 366,244 L366.2,244.5 C366.6,242.6 369.4,242.8 369.4,245 L369.6,246.4 C370.2,244.8 372.8,245 372.8,247 L373,254 C373,257 371.2,259.5 370.5,262.5" fill="#fff" stroke="#111" stroke-width="1.2" stroke-linejoin="round"/><path d="M362.5,246.5 L362.8,252 M366,244.5 L366.2,251.5 M369.5,246 L369.6,252" stroke="#111" stroke-width="0.9"/><path d="M388.2,244 V261.5 M404.6,244 V261.5" stroke="#e02828" stroke-width="1.8"/><circle cx="396.4" cy="252" r="3.6" fill="#f4f020"/><path d="M389,252 H403.8" stroke="#e02828" stroke-width="1.1"/><path d="M389,252 L392,250.3 L392,253.7 Z M403.8,252 L400.8,250.3 L400.8,253.7 Z" fill="#e02828"/><path d="M395,250.5 L397.8,253.5" stroke="#333" stroke-width="0.9"/><circle cx="418.4" cy="247.0" r="1.5" fill="#1a1a6a"/><path d="M422.3,247.0 H437.2" stroke="#1a1a6a" stroke-width="2.8" stroke-linecap="round"/><circle cx="418.4" cy="253.2" r="1.5" fill="#1a1a6a"/><path d="M422.3,253.2 H437.2" stroke="#1a1a6a" stroke-width="2.8" stroke-linecap="round"/><circle cx="418.4" cy="259.4" r="1.5" fill="#1a1a6a"/><path d="M422.3,259.4 H437.2" stroke="#1a1a6a" stroke-width="2.8" stroke-linecap="round"/><defs><linearGradient id="bt" x1="0" y1="0" x2="0" y2="1"><stop offset="0" stop-color="#ff30ff"/><stop offset="0.5" stop-color="#3030ff"/><stop offset="1" stop-color="#9020d0"/></linearGradient></defs><path d="M459.6,244.6 L467.6,251.8 L459.6,259" fill="none" stroke="#111" stroke-width="1.1"/><path d="M478.2,244.6 L470.2,251.8 L478.2,259" fill="none" stroke="#111" stroke-width="1.1"/><ellipse cx="462.6" cy="252" rx="3.4" ry="4.6" fill="url(#bt)" stroke="#222" stroke-width="0.6"/><ellipse cx="475.2" cy="252" rx="3.4" ry="4.6" fill="url(#bt)" stroke="#222" stroke-width="0.6"/><path d="M460.5,251.5 L464,251.5 M473.8,251.5 L477.5,251.5" stroke="#ffffff" stroke-width="0.9" opacity="0.7"/><path d="M494.2,243 L506.6,249.6 L494.2,256 Z" fill="#bcbcbc"/><rect x="489" y="253" width="2" height="11" fill="#b8b8b8"/><rect x="492.5" y="257" width="2" height="7" fill="#b8b8b8"/><rect x="496" y="255.5" width="2" height="8.5" fill="#b8b8b8"/><rect x="499.5" y="257" width="2" height="7" fill="#b8b8b8"/><rect x="503" y="252" width="2" height="12" fill="#b8b8b8"/><rect x="506.5" y="257.5" width="2" height="6.5" fill="#b8b8b8"/><text x="535" y="249.2" text-anchor="middle" font-family="Liberation Serif" font-weight="bold" font-size="7.5" fill="#3a3ab0">W</text><text x="535" y="256" text-anchor="middle" font-family="Liberation Sans" font-weight="bold" font-size="7.5" fill="#40c080">V</text><text x="535" y="262.8" text-anchor="middle" font-family="Liberation Sans" font-weight="bold" font-size="7.5" fill="#a04040">A</text><path d="M542,246.5 L545,249.0 L550.5,243.0" fill="none" stroke="#e0207a" stroke-width="2"/><path d="M542,253.5 L545,256.0 L550.5,250.0" fill="none" stroke="#e0207a" stroke-width="2"/><path d="M542,260.2 L545,262.7 L550.5,256.7" fill="none" stroke="#e0207a" stroke-width="2"/><path d="M564.5,262 V245 M564.5,262 H580" stroke="#111" stroke-width="1.6"/><path d="M560.6,246.5 L564.5,241.5 L568.4,246.5 Z M578.5,258.4 L583,262 L578.5,265.6 Z" fill="#111"/><path d="M567,260 L568.5,252 L570,256 L571.5,248 L573,254 L574.5,244 L576,252 L577.5,247 L579,255 L580.5,250 L582,256" fill="none" stroke="#3040c8" stroke-width="1.1"/><path d="M602,252.5 H622 M602.5,249 V256 M621.5,249 V256" stroke="#c4c4c4" stroke-width="1.6"/><ellipse cx="612" cy="252.5" rx="3.8" ry="7.5" fill="none" stroke="#c8c8c8" stroke-width="1.4"/><path d="M609.5,245 L612,242 L614.5,245 M609.5,260 L612,263 L614.5,260" fill="none" stroke="#c8c8c8" stroke-width="1.3"/></svg>
<div style="position:absolute;left:4.8px;top:234.4px;width:1.2px;height:425px;background:#3574aa"></div>
<div style="position:absolute;left:6.0px;top:234.4px;width:3.0px;height:425px;background:#eaf2f9"></div>
<div style="position:absolute;left:9px;top:269.2px;width:907px;height:1.3px;background:#505050"></div>
<div style="position:absolute;left:9px;top:269.2px;width:1.2px;height:387px;background:#606060"></div>
<div style="position:absolute;left:914.8px;top:269.2px;width:1.3px;height:387px;background:#505050"></div>
<div style="position:absolute;left:916.1px;top:234.4px;width:0.9px;height:425px;background:#eaf2f9"></div>
<div style="position:absolute;left:917px;top:232.2px;width:2px;height:427px;background:#2d3e5c"></div>
<div style="position:absolute;left:10.2px;top:270.5px;width:57.4px;height:383.70000000000005px;background:#b2f8b2"></div>
<div style="position:absolute;left:67.6px;top:270.5px;width:57.0px;height:383.70000000000005px;background:#ffadad"></div>
<div style="position:absolute;left:124.6px;top:270.5px;width:790.2px;height:326.0px;background:#ffffff"></div>
<div style="position:absolute;left:124.6px;top:270.5px;width:790.2px;height:20.0px;background:#def2fc"></div>
<div style="position:absolute;left:124.6px;top:315.5px;width:790.2px;height:25px;background:#def2fc"></div>
<div style="position:absolute;left:124.6px;top:365.5px;width:790.2px;height:25px;background:#def2fc"></div>
<div style="position:absolute;left:124.6px;top:415.5px;width:790.2px;height:25px;background:#def2fc"></div>
<div style="position:absolute;left:124.6px;top:465.5px;width:790.2px;height:25px;background:#def2fc"></div>
<div style="position:absolute;left:124.6px;top:515.5px;width:790.2px;height:25px;background:#def2fc"></div>
<div style="position:absolute;left:124.6px;top:565.5px;width:790.2px;height:25px;background:#def2fc"></div>
<div style="position:absolute;left:124.6px;top:290px;width:790.2px;height:1px;background-image:repeating-linear-gradient(90deg,#b8b8b8 0 3.5px,transparent 3.5px 7.4px)"></div>
<div style="position:absolute;left:124.6px;top:315px;width:790.2px;height:1px;background-image:repeating-linear-gradient(90deg,#b8b8b8 0 3.5px,transparent 3.5px 7.4px)"></div>
<div style="position:absolute;left:124.6px;top:340px;width:790.2px;height:1px;background-image:repeating-linear-gradient(90deg,#b8b8b8 0 3.5px,transparent 3.5px 7.4px)"></div>
<div style="position:absolute;left:124.6px;top:365px;width:790.2px;height:1px;background-image:repeating-linear-gradient(90deg,#b8b8b8 0 3.5px,transparent 3.5px 7.4px)"></div>
<div style="position:absolute;left:124.6px;top:390px;width:790.2px;height:1px;background-image:repeating-linear-gradient(90deg,#b8b8b8 0 3.5px,transparent 3.5px 7.4px)"></div>
<div style="position:absolute;left:124.6px;top:415px;width:790.2px;height:1px;background-image:repeating-linear-gradient(90deg,#b8b8b8 0 3.5px,transparent 3.5px 7.4px)"></div>
<div style="position:absolute;left:124.6px;top:440px;width:790.2px;height:1px;background-image:repeating-linear-gradient(90deg,#b8b8b8 0 3.5px,transparent 3.5px 7.4px)"></div>
<div style="position:absolute;left:124.6px;top:465px;width:790.2px;height:1px;background-image:repeating-linear-gradient(90deg,#b8b8b8 0 3.5px,transparent 3.5px 7.4px)"></div>
<div style="position:absolute;left:124.6px;top:490px;width:790.2px;height:1px;background-image:repeating-linear-gradient(90deg,#b8b8b8 0 3.5px,transparent 3.5px 7.4px)"></div>
<div style="position:absolute;left:124.6px;top:515px;width:790.2px;height:1px;background-image:repeating-linear-gradient(90deg,#b8b8b8 0 3.5px,transparent 3.5px 7.4px)"></div>
<div style="position:absolute;left:124.6px;top:540px;width:790.2px;height:1px;background-image:repeating-linear-gradient(90deg,#b8b8b8 0 3.5px,transparent 3.5px 7.4px)"></div>
<div style="position:absolute;left:124.6px;top:565px;width:790.2px;height:1px;background-image:repeating-linear-gradient(90deg,#b8b8b8 0 3.5px,transparent 3.5px 7.4px)"></div>
<div style="position:absolute;left:124.6px;top:590px;width:790.2px;height:1px;background-image:repeating-linear-gradient(90deg,#b8b8b8 0 3.5px,transparent 3.5px 7.4px)"></div>
<div style="position:absolute;left:150px;top:273.1px;width:1px;height:323.4px;background-image:repeating-linear-gradient(180deg,#b8b8b8 0 3.5px,transparent 3.5px 7.3px)"></div>
<div style="position:absolute;left:225px;top:273.1px;width:1px;height:323.4px;background-image:repeating-linear-gradient(180deg,#b8b8b8 0 3.5px,transparent 3.5px 7.3px)"></div>
<div style="position:absolute;left:300px;top:273.1px;width:1px;height:323.4px;background-image:repeating-linear-gradient(180deg,#b8b8b8 0 3.5px,transparent 3.5px 7.3px)"></div>
<div style="position:absolute;left:375px;top:273.1px;width:1px;height:323.4px;background-image:repeating-linear-gradient(180deg,#b8b8b8 0 3.5px,transparent 3.5px 7.3px)"></div>
<div style="position:absolute;left:449px;top:273.1px;width:1px;height:323.4px;background-image:repeating-linear-gradient(180deg,#b8b8b8 0 3.5px,transparent 3.5px 7.3px)"></div>
<div style="position:absolute;left:524px;top:273.1px;width:1px;height:323.4px;background-image:repeating-linear-gradient(180deg,#b8b8b8 0 3.5px,transparent 3.5px 7.3px)"></div>
<div style="position:absolute;left:599px;top:273.1px;width:1px;height:323.4px;background-image:repeating-linear-gradient(180deg,#b8b8b8 0 3.5px,transparent 3.5px 7.3px)"></div>
<div style="position:absolute;left:674px;top:273.1px;width:1px;height:323.4px;background-image:repeating-linear-gradient(180deg,#b8b8b8 0 3.5px,transparent 3.5px 7.3px)"></div>
<div style="position:absolute;left:748px;top:273.1px;width:1px;height:323.4px;background-image:repeating-linear-gradient(180deg,#b8b8b8 0 3.5px,transparent 3.5px 7.3px)"></div>
<div style="position:absolute;left:823px;top:273.1px;width:1px;height:323.4px;background-image:repeating-linear-gradient(180deg,#b8b8b8 0 3.5px,transparent 3.5px 7.3px)"></div>
<div style="position:absolute;left:898px;top:273.1px;width:1px;height:323.4px;background-image:repeating-linear-gradient(180deg,#b8b8b8 0 3.5px,transparent 3.5px 7.3px)"></div>
<div style="position:absolute;left:10.2px;top:596.4px;width:904.6px;height:2.6px;background:#ffffff"></div>
<div style="position:absolute;left:124.6px;top:599.0px;width:790.2px;height:35.8px;background:#d9d5bf"></div>
<div style="position:absolute;left:124.6px;top:634.8px;width:790.2px;height:2.2px;background:#7c7c7c"></div>
<div style="position:absolute;left:124.6px;top:637.0px;width:790.2px;height:16.4px;background:#ffffff"></div>
<div style="position:absolute;left:9px;top:653.4px;width:907px;height:2.1px;background:#5a5a5a"></div>
<div style="position:absolute;left:9px;top:655.5px;width:907px;height:3.5px;background:#c8d4e4"></div>
<div style="position:absolute;left:10px;top:283.40000000000003px;width:47px;height:14px;line-height:14px;text-align:right;white-space:nowrap;font-family:'Liberation Sans', sans-serif;font-size:11.8px;color:#142414;letter-spacing:-0.15px;-webkit-text-stroke:0.3px currentColor;">12.00</div>
<div style="position:absolute;left:62.6px;top:289.5px;width:5.8px;height:1.7px;background:#1a1a1a"></div>
<div style="position:absolute;left:67px;top:283.40000000000003px;width:47px;height:14px;line-height:14px;text-align:right;white-space:nowrap;font-family:'Liberation Sans', sans-serif;font-size:11.8px;color:#142414;letter-spacing:-0.15px;-webkit-text-stroke:0.3px currentColor;color:#2a1414;">1.10</div>
<div style="position:absolute;left:118.6px;top:289.5px;width:5.8px;height:1.7px;background:#1a1a1a"></div>
<div style="position:absolute;left:10px;top:308.40000000000003px;width:47px;height:14px;line-height:14px;text-align:right;white-space:nowrap;font-family:'Liberation Sans', sans-serif;font-size:11.8px;color:#142414;letter-spacing:-0.15px;-webkit-text-stroke:0.3px currentColor;">11.00</div>
<div style="position:absolute;left:62.6px;top:314.5px;width:5.8px;height:1.7px;background:#1a1a1a"></div>
<div style="position:absolute;left:67px;top:308.40000000000003px;width:47px;height:14px;line-height:14px;text-align:right;white-space:nowrap;font-family:'Liberation Sans', sans-serif;font-size:11.8px;color:#142414;letter-spacing:-0.15px;-webkit-text-stroke:0.3px currentColor;color:#2a1414;">1.00</div>
<div style="position:absolute;left:118.6px;top:314.5px;width:5.8px;height:1.7px;background:#1a1a1a"></div>
<div style="position:absolute;left:10px;top:333.40000000000003px;width:47px;height:14px;line-height:14px;text-align:right;white-space:nowrap;font-family:'Liberation Sans', sans-serif;font-size:11.8px;color:#142414;letter-spacing:-0.15px;-webkit-text-stroke:0.3px currentColor;">10.00</div>
<div style="position:absolute;left:62.6px;top:339.5px;width:5.8px;height:1.7px;background:#1a1a1a"></div>
<div style="position:absolute;left:67px;top:333.40000000000003px;width:47px;height:14px;line-height:14px;text-align:right;white-space:nowrap;font-family:'Liberation Sans', sans-serif;font-size:11.8px;color:#142414;letter-spacing:-0.15px;-webkit-text-stroke:0.3px currentColor;color:#2a1414;">0.90</div>
<div style="position:absolute;left:118.6px;top:339.5px;width:5.8px;height:1.7px;background:#1a1a1a"></div>
<div style="position:absolute;left:10px;top:358.40000000000003px;width:47px;height:14px;line-height:14px;text-align:right;white-space:nowrap;font-family:'Liberation Sans', sans-serif;font-size:11.8px;color:#142414;letter-spacing:-0.15px;-webkit-text-stroke:0.3px currentColor;">9.00</div>
<div style="position:absolute;left:62.6px;top:364.5px;width:5.8px;height:1.7px;background:#1a1a1a"></div>
<div style="position:absolute;left:67px;top:358.40000000000003px;width:47px;height:14px;line-height:14px;text-align:right;white-space:nowrap;font-family:'Liberation Sans', sans-serif;font-size:11.8px;color:#142414;letter-spacing:-0.15px;-webkit-text-stroke:0.3px currentColor;color:#2a1414;">0.80</div>
<div style="position:absolute;left:118.6px;top:364.5px;width:5.8px;height:1.7px;background:#1a1a1a"></div>
<div style="position:absolute;left:10px;top:383.40000000000003px;width:47px;height:14px;line-height:14px;text-align:right;white-space:nowrap;font-family:'Liberation Sans', sans-serif;font-size:11.8px;color:#142414;letter-spacing:-0.15px;-webkit-text-stroke:0.3px currentColor;">8.00</div>
<div style="position:absolute;left:62.6px;top:389.5px;width:5.8px;height:1.7px;background:#1a1a1a"></div>
<div style="position:absolute;left:67px;top:383.40000000000003px;width:47px;height:14px;line-height:14px;text-align:right;white-space:nowrap;font-family:'Liberation Sans', sans-serif;font-size:11.8px;color:#142414;letter-spacing:-0.15px;-webkit-text-stroke:0.3px currentColor;color:#2a1414;">0.70</div>
<div style="position:absolute;left:118.6px;top:389.5px;width:5.8px;height:1.7px;background:#1a1a1a"></div>
<div style="position:absolute;left:10px;top:408.40000000000003px;width:47px;height:14px;line-height:14px;text-align:right;white-space:nowrap;font-family:'Liberation Sans', sans-serif;font-size:11.8px;color:#142414;letter-spacing:-0.15px;-webkit-text-stroke:0.3px currentColor;">7.00</div>
<div style="position:absolute;left:62.6px;top:414.5px;width:5.8px;height:1.7px;background:#1a1a1a"></div>
<div style="position:absolute;left:67px;top:408.40000000000003px;width:47px;height:14px;line-height:14px;text-align:right;white-space:nowrap;font-family:'Liberation Sans', sans-serif;font-size:11.8px;color:#142414;letter-spacing:-0.15px;-webkit-text-stroke:0.3px currentColor;color:#2a1414;">0.60</div>
<div style="position:absolute;left:118.6px;top:414.5px;width:5.8px;height:1.7px;background:#1a1a1a"></div>
<div style="position:absolute;left:10px;top:433.40000000000003px;width:47px;height:14px;line-height:14px;text-align:right;white-space:nowrap;font-family:'Liberation Sans', sans-serif;font-size:11.8px;color:#142414;letter-spacing:-0.15px;-webkit-text-stroke:0.3px currentColor;">6.00</div>
<div style="position:absolute;left:62.6px;top:439.5px;width:5.8px;height:1.7px;background:#1a1a1a"></div>
<div style="position:absolute;left:67px;top:433.40000000000003px;width:47px;height:14px;line-height:14px;text-align:right;white-space:nowrap;font-family:'Liberation Sans', sans-serif;font-size:11.8px;color:#142414;letter-spacing:-0.15px;-webkit-text-stroke:0.3px currentColor;color:#2a1414;">0.50</div>
<div style="position:absolute;left:118.6px;top:439.5px;width:5.8px;height:1.7px;background:#1a1a1a"></div>
<div style="position:absolute;left:10px;top:458.40000000000003px;width:47px;height:14px;line-height:14px;text-align:right;white-space:nowrap;font-family:'Liberation Sans', sans-serif;font-size:11.8px;color:#142414;letter-spacing:-0.15px;-webkit-text-stroke:0.3px currentColor;">5.00</div>
<div style="position:absolute;left:62.6px;top:464.5px;width:5.8px;height:1.7px;background:#1a1a1a"></div>
<div style="position:absolute;left:67px;top:458.40000000000003px;width:47px;height:14px;line-height:14px;text-align:right;white-space:nowrap;font-family:'Liberation Sans', sans-serif;font-size:11.8px;color:#142414;letter-spacing:-0.15px;-webkit-text-stroke:0.3px currentColor;color:#2a1414;">0.40</div>
<div style="position:absolute;left:118.6px;top:464.5px;width:5.8px;height:1.7px;background:#1a1a1a"></div>
<div style="position:absolute;left:10px;top:483.40000000000003px;width:47px;height:14px;line-height:14px;text-align:right;white-space:nowrap;font-family:'Liberation Sans', sans-serif;font-size:11.8px;color:#142414;letter-spacing:-0.15px;-webkit-text-stroke:0.3px currentColor;">4.00</div>
<div style="position:absolute;left:62.6px;top:489.5px;width:5.8px;height:1.7px;background:#1a1a1a"></div>
<div style="position:absolute;left:67px;top:483.40000000000003px;width:47px;height:14px;line-height:14px;text-align:right;white-space:nowrap;font-family:'Liberation Sans', sans-serif;font-size:11.8px;color:#142414;letter-spacing:-0.15px;-webkit-text-stroke:0.3px currentColor;color:#2a1414;">0.30</div>
<div style="position:absolute;left:118.6px;top:489.5px;width:5.8px;height:1.7px;background:#1a1a1a"></div>
<div style="position:absolute;left:10px;top:508.4px;width:47px;height:14px;line-height:14px;text-align:right;white-space:nowrap;font-family:'Liberation Sans', sans-serif;font-size:11.8px;color:#142414;letter-spacing:-0.15px;-webkit-text-stroke:0.3px currentColor;">3.00</div>
<div style="position:absolute;left:62.6px;top:514.5px;width:5.8px;height:1.7px;background:#1a1a1a"></div>
<div style="position:absolute;left:67px;top:508.4px;width:47px;height:14px;line-height:14px;text-align:right;white-space:nowrap;font-family:'Liberation Sans', sans-serif;font-size:11.8px;color:#142414;letter-spacing:-0.15px;-webkit-text-stroke:0.3px currentColor;color:#2a1414;">0.20</div>
<div style="position:absolute;left:118.6px;top:514.5px;width:5.8px;height:1.7px;background:#1a1a1a"></div>
<div style="position:absolute;left:10px;top:533.4px;width:47px;height:14px;line-height:14px;text-align:right;white-space:nowrap;font-family:'Liberation Sans', sans-serif;font-size:11.8px;color:#142414;letter-spacing:-0.15px;-webkit-text-stroke:0.3px currentColor;">2.00</div>
<div style="position:absolute;left:62.6px;top:539.5px;width:5.8px;height:1.7px;background:#1a1a1a"></div>
<div style="position:absolute;left:67px;top:533.4px;width:47px;height:14px;line-height:14px;text-align:right;white-space:nowrap;font-family:'Liberation Sans', sans-serif;font-size:11.8px;color:#142414;letter-spacing:-0.15px;-webkit-text-stroke:0.3px currentColor;color:#2a1414;">0.10</div>
<div style="position:absolute;left:118.6px;top:539.5px;width:5.8px;height:1.7px;background:#1a1a1a"></div>
<div style="position:absolute;left:10px;top:558.4px;width:47px;height:14px;line-height:14px;text-align:right;white-space:nowrap;font-family:'Liberation Sans', sans-serif;font-size:11.8px;color:#142414;letter-spacing:-0.15px;-webkit-text-stroke:0.3px currentColor;">1.00</div>
<div style="position:absolute;left:62.6px;top:564.5px;width:5.8px;height:1.7px;background:#1a1a1a"></div>
<div style="position:absolute;left:67px;top:558.4px;width:47px;height:14px;line-height:14px;text-align:right;white-space:nowrap;font-family:'Liberation Sans', sans-serif;font-size:11.8px;color:#142414;letter-spacing:-0.15px;-webkit-text-stroke:0.3px currentColor;color:#2a1414;">0.00</div>
<div style="position:absolute;left:118.6px;top:564.5px;width:5.8px;height:1.7px;background:#1a1a1a"></div>
<div style="position:absolute;left:10px;top:583.4px;width:47px;height:14px;line-height:14px;text-align:right;white-space:nowrap;font-family:'Liberation Sans', sans-serif;font-size:11.8px;color:#142414;letter-spacing:-0.15px;-webkit-text-stroke:0.3px currentColor;">0.00</div>
<div style="position:absolute;left:62.6px;top:589.5px;width:5.8px;height:1.7px;background:#1a1a1a"></div>
<div style="position:absolute;left:67px;top:583.4px;width:47px;height:14px;line-height:14px;text-align:right;white-space:nowrap;font-family:'Liberation Sans', sans-serif;font-size:11.8px;color:#142414;letter-spacing:-0.15px;-webkit-text-stroke:0.3px currentColor;color:#2a1414;">-0.09</div>
<div style="position:absolute;left:118.6px;top:589.5px;width:5.8px;height:1.7px;background:#1a1a1a"></div>
<div style="position:absolute;left:10.2px;top:600.8px;width:57.4px;height:16px;line-height:16px;text-align:center;white-space:nowrap;font-family:'Liberation Sans', sans-serif;font-size:14.2px;-webkit-text-stroke:0.15px currentColor;color:#284428;">Voltage</div>
<div style="position:absolute;left:10.2px;top:620.2px;width:57.4px;height:16px;line-height:16px;text-align:center;white-space:nowrap;font-family:'Liberation Sans', sans-serif;font-size:14.2px;-webkit-text-stroke:0.15px currentColor;color:#284428;letter-spacing:1.2px;text-indent:1.2px">( V )</div>
<div style="position:absolute;left:67.6px;top:600.8px;width:57.0px;height:16px;line-height:16px;text-align:center;white-space:nowrap;font-family:'Liberation Sans', sans-serif;font-size:14.2px;-webkit-text-stroke:0.15px currentColor;color:#44202e;">Current</div>
<div style="position:absolute;left:67.6px;top:620.2px;width:57.0px;height:16px;line-height:16px;text-align:center;white-space:nowrap;font-family:'Liberation Sans', sans-serif;font-size:14.2px;-webkit-text-stroke:0.15px currentColor;color:#44202e;letter-spacing:1.2px;text-indent:1.2px">( A )</div>
<div style="position:absolute;left:149.8px;top:599.0px;width:1.3px;height:4.5px;background:#202020"></div>
<div style="position:absolute;left:224.57000000000002px;top:599.0px;width:1.3px;height:4.5px;background:#202020"></div>
<div style="position:absolute;left:299.34px;top:599.0px;width:1.3px;height:11px;background:#202020"></div>
<div style="position:absolute;left:374.11px;top:599.0px;width:1.3px;height:4.5px;background:#202020"></div>
<div style="position:absolute;left:448.88px;top:599.0px;width:1.3px;height:4.5px;background:#202020"></div>
<div style="position:absolute;left:523.65px;top:599.0px;width:1.3px;height:4.5px;background:#202020"></div>
<div style="position:absolute;left:598.42px;top:599.0px;width:1.3px;height:4.5px;background:#202020"></div>
<div style="position:absolute;left:673.1899999999999px;top:599.0px;width:1.3px;height:4.5px;background:#202020"></div>
<div style="position:absolute;left:747.9599999999999px;top:599.0px;width:1.3px;height:4.5px;background:#202020"></div>
<div style="position:absolute;left:822.7299999999999px;top:599.0px;width:1.3px;height:4.5px;background:#202020"></div>
<div style="position:absolute;left:897.4999999999999px;top:599.0px;width:1.3px;height:4.5px;background:#202020"></div>
<div style="position:absolute;left:123.0px;top:605px;width:50px;height:14px;line-height:14px;text-align:center;white-space:nowrap;font-family:'Liberation Sans', sans-serif;font-size:11.5px;color:#2a2a2a;">80.00</div>
<div style="position:absolute;left:422.08000000000004px;top:605px;width:50px;height:14px;line-height:14px;text-align:center;white-space:nowrap;font-family:'Liberation Sans', sans-serif;font-size:11.5px;color:#2a2a2a;">20.00</div>
<div style="position:absolute;left:571.62px;top:605px;width:50px;height:14px;line-height:14px;text-align:center;white-space:nowrap;font-family:'Liberation Sans', sans-serif;font-size:11.5px;color:#2a2a2a;">40.00</div>
<div style="position:absolute;left:721.16px;top:605px;width:50px;height:14px;line-height:14px;text-align:center;white-space:nowrap;font-family:'Liberation Sans', sans-serif;font-size:11.5px;color:#2a2a2a;">60.00</div>
<div style="position:absolute;left:870.6999999999999px;top:605px;width:50px;height:14px;line-height:14px;text-align:center;white-space:nowrap;font-family:'Liberation Sans', sans-serif;font-size:11.5px;color:#2a2a2a;">80.00</div>
<div style="position:absolute;left:249.34px;top:615.0px;width:100px;height:16px;line-height:16px;text-align:center;white-space:nowrap;font-family:'Liberation Sans', sans-serif;font-size:14px;font-weight:bold;color:#222;">7,400.00 ms</div>
<div style="position:absolute;left:127.5px;top:639px;width:0;height:0;border-top:7px solid transparent;border-bottom:7px solid transparent;border-right:13px solid #000"></div>
<div style="position:absolute;left:682.5px;top:638.5px;width:21.2px;height:13.5px;background:#858585"></div>
<div style="position:absolute;left:865.2px;top:638.8px;width:0;height:0;border-top:7px solid transparent;border-bottom:7px solid transparent;border-left:12.5px solid #000"></div>
<div style="position:absolute;left:881.4px;top:638.8px;width:0;height:0;border-top:7px solid transparent;border-bottom:7px solid transparent;border-right:7.3px solid #000"></div>
<div style="position:absolute;left:888.7px;top:638.8px;width:0;height:0;border-top:7px solid transparent;border-bottom:7px solid transparent;border-right:7.3px solid #000"></div>
<div style="position:absolute;left:898.7px;top:638.8px;width:0;height:0;border-top:7px solid transparent;border-bottom:7px solid transparent;border-left:7.3px solid #000"></div>
<div style="position:absolute;left:906.0px;top:638.8px;width:0;height:0;border-top:7px solid transparent;border-bottom:7px solid transparent;border-left:7.3px solid #000"></div>
<svg style="position:absolute;left:0;top:0" width="919" height="659" viewBox="0 0 919 659">
<polyline points="126,566.7 915,566.7" fill="none" stroke="#e46a6a" stroke-width="1.4"/>
<path d="M124.6,363.1 L189.1,363.2 C190.8,363.8 195.7,365.0 199.6,366.6 C203.5,368.2 208.2,370.7 212.6,372.6 C216.9,374.5 221.3,376.3 225.7,378.2 C230.1,380.1 234.5,381.9 238.8,383.9 C243.2,385.9 247.5,387.8 251.8,390.0 C256.1,392.2 260.5,394.6 264.9,396.9 C269.2,399.2 273.5,401.6 277.9,403.9 C282.2,406.2 286.8,408.6 291,410.9 C295.2,413.2 298.9,415.2 303.1,417.6 C307.3,420.0 311.8,422.5 316.1,425.0 C320.5,427.5 324.9,430.2 329.2,432.6 C333.5,435.0 338.7,437.7 342.2,439.4 C345.7,441.1 346.8,441.8 350.1,443.0 C353.4,444.2 357.7,445.5 361.8,446.6 C365.9,447.7 371.6,448.8 374.9,449.5 C378.2,450.2 378.1,450.2 381.4,450.9 C384.7,451.5 390.4,452.6 394.5,453.4 C398.6,454.2 396.9,454.5 406.2,455.5 C415.4,456.5 431.0,458.4 450,459.5 C469.0,460.6 491.7,461.5 520,462.2 C548.3,462.9 586.7,463.4 620,463.8 C653.3,464.2 678.2,464.2 720,464.3 C761.8,464.4 838.5,464.5 871,464.5 C903.5,464.5 907.7,464.5 915,464.5" fill="none" stroke="#38b838" stroke-width="1.9"/>
<line x1="189.3" y1="270.5" x2="189.3" y2="595.8" stroke="#e8202a" stroke-width="1.5"/>
<line x1="381.8" y1="270.5" x2="381.8" y2="595.8" stroke="#e8202a" stroke-width="1.5"/>
<line x1="164" y1="394.4" x2="182" y2="394.4" stroke="#e8202a" stroke-width="1.6"/>
<path d="M189,394.4 L180,389.5 L180,399.3 Z" fill="#e8202a"/>
<line x1="389" y1="394.4" x2="406" y2="394.4" stroke="#e8202a" stroke-width="1.6"/>
<path d="M381.6,394.4 L390.6,389.5 L390.6,399.3 Z" fill="#e8202a"/>
</svg>
<div style="position:absolute;left:405.4px;top:273.3px;width:466.3px;height:240.7px;background:rgba(250,250,182,0.92)"></div>
<div style="position:absolute;left:416.5px;top:275.3px;width:460px;height:20px;line-height:20px;text-align:left;white-space:nowrap;font-family:'Liberation Sans', sans-serif;font-size:16px;font-weight:bold;color:#e41414;letter-spacing:0.7px;">25,900,000 ns</div>
<div style="position:absolute;left:416.5px;top:315.24px;width:460px;height:20px;line-height:20px;text-align:left;white-space:nowrap;font-family:'Liberation Sans', sans-serif;font-size:16px;font-weight:bold;color:#e41414;letter-spacing:0.7px;">Delta V: -3.529 V</div>
<div style="position:absolute;left:416.5px;top:335.21000000000004px;width:460px;height:20px;line-height:20px;text-align:left;white-space:nowrap;font-family:'Liberation Sans', sans-serif;font-size:16px;font-weight:bold;color:#e41414;letter-spacing:0.7px;">Delta I: -250 uA</div>
<div style="position:absolute;left:416.5px;top:375.15px;width:460px;height:20px;line-height:20px;text-align:left;white-space:nowrap;font-family:'Liberation Sans', sans-serif;font-size:16px;font-weight:bold;color:#e41414;letter-spacing:0.7px;">dv/dt: -136 uV/us</div>
<div style="position:absolute;left:416.5px;top:395.12px;width:460px;height:20px;line-height:20px;text-align:left;white-space:nowrap;font-family:'Liberation Sans', sans-serif;font-size:16px;font-weight:bold;color:#e41414;letter-spacing:0.7px;">Max Rising Slew Rate: 1.00 mV/us at 7,408,622.00 us</div>
<div style="position:absolute;left:416.5px;top:415.09000000000003px;width:460px;height:20px;line-height:20px;text-align:left;white-space:nowrap;font-family:'Liberation Sans', sans-serif;font-size:16px;font-weight:bold;color:#e41414;letter-spacing:0.7px;">Max Falling Slew Rate: 1.16 mV/us at 7,393,342.00 us</div>
<div style="position:absolute;left:416.5px;top:455.03px;width:460px;height:20px;line-height:20px;text-align:left;white-space:nowrap;font-family:'Liberation Sans', sans-serif;font-size:16px;font-weight:bold;color:#e41414;letter-spacing:0.7px;">di/dt: 0 uA/us</div>
<div style="position:absolute;left:416.5px;top:475.0px;width:460px;height:20px;line-height:20px;text-align:left;white-space:nowrap;font-family:'Liberation Sans', sans-serif;font-size:16px;font-weight:bold;color:#e41414;letter-spacing:0.7px;">Max Load Step Rate: 0.03 mA/us at 7,392,242.00 us</div>
<div style="position:absolute;left:416.5px;top:494.97px;width:460px;height:20px;line-height:20px;text-align:left;white-space:nowrap;font-family:'Liberation Sans', sans-serif;font-size:16px;font-weight:bold;color:#e41414;letter-spacing:0.7px;">Max Load Release Rate: 0.03 mA/us at 7,395,542.00 us</div>
</body></html>
